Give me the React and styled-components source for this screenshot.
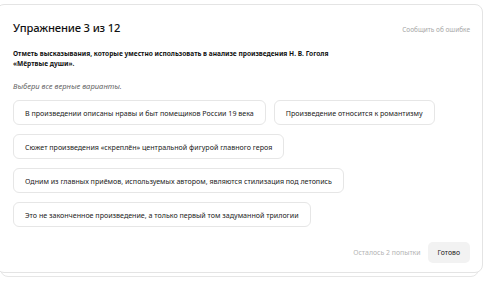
import React from "react";
import styled, { createGlobalStyle } from "styled-components";

const options = [
  ["В произведении описаны нравы и быт помещиков России 19 века", "Произведение относится к романтизму"],
  ["Сюжет произведения «скреплён» центральной фигурой главного героя"],
  ["Одним из главных приёмов, используемых автором, являются стилизация под летопись"],
  ["Это не законченное произведение, а только первый том задуманной трилогии"],
];

const GlobalStyle = createGlobalStyle`
  html, body {
    margin: 0;
    padding: 0;
    background: #ffffff;
    overflow: hidden;
  }
  body {
    font-family: "Noto Sans", "Open Sans", sans-serif;
    color: #000;
  }
`;

const Page = styled.div`
  width: 500px;
  height: 282px;
  padding: 4px 0 0 0;
  box-sizing: border-box;
`;

const Stack = styled.div`
  position: relative;
  width: 487px;
  margin-left: -4px;

  &::before,
  &::after {
    content: "";
    position: absolute;
    background: #fff;
    border: 1px solid #e6e6e6;
    border-radius: 8px;
    z-index: 0;
  }
  &::before {
    left: 4px;
    right: 4px;
    bottom: -4px;
    height: 20px;
  }
  &::after {
    left: 10px;
    right: 12px;
    bottom: -8px;
    height: 20px;
    z-index: -1;
  }
`;

const Card = styled.section`
  position: relative;
  z-index: 1;
  background: #fff;
  border: 1px solid #e4e4e4;
  border-radius: 8px;
  padding: 15px 12px 9px 16px;
  height: 269px;
  box-sizing: border-box;
  display: flex;
  flex-direction: column;
`;

const Header = styled.div`
  display: flex;
  justify-content: space-between;
  align-items: baseline;
`;

const Title = styled.h2`
  margin: 0;
  font-size: 11.2px;
  font-weight: 500;
  letter-spacing: -0.15px;
  color: #111;
`;

const Report = styled.a`
  font-size: 6.5px;
  color: #a8a8a8;
  text-decoration: none;
`;

const Question = styled.p`
  margin: 14px 0 0;
  font-size: 6.6px;
  line-height: 10px;
  font-weight: 700;
  color: #111;
`;

const Hint = styled.p`
  margin: 12px 0 0;
  font-size: 7.6px;
  font-style: italic;
  color: #666;
`;

const Options = styled.div`
  margin-top: 9px;
  display: flex;
  flex-direction: column;
  gap: 9px;
`;

const Row = styled.div`
  display: flex;
  gap: 8px;
`;

const Option = styled.button`
  height: 25px;
  padding: 0 11px;
  background: #fff;
  border: 1px solid #e6e6e6;
  border-radius: 6px;
  font-family: inherit;
  font-size: 7.1px;
  color: #222;
  cursor: pointer;
  white-space: nowrap;
`;

const Footer = styled.div`
  margin-top: auto;
  display: flex;
  justify-content: flex-end;
  align-items: center;
  gap: 7px;
`;

const Attempts = styled.span`
  font-size: 6.9px;
  color: #b4b4b4;
`;

const Done = styled.button`
  height: 21px;
  padding: 0 10px;
  background: #f2f2f2;
  border: none;
  border-radius: 5px;
  font-family: inherit;
  font-size: 6.9px;
  color: #222;
`;

export default function App() {
  return (
    <>
      <GlobalStyle />
      <Page>
        <Stack>
          <Card>
            <Header>
              <Title>Упражнение 3 из 12</Title>
              <Report href="#">Сообщить об ошибке</Report>
            </Header>
            <Question>
              Отметь высказывания, которые уместно использовать в анализе произведения Н. В. Гоголя
              <br />
              «Мёртвые души».
            </Question>
            <Hint>Выбери все верные варианты.</Hint>
            <Options>
              {options.map((row, i) => (
                <Row key={i}>
                  {row.map((text) => (
                    <Option key={text}>{text}</Option>
                  ))}
                </Row>
              ))}
            </Options>
            <Footer>
              <Attempts>Осталось 2 попытки</Attempts>
              <Done>Готово</Done>
            </Footer>
          </Card>
        </Stack>
      </Page>
    </>
  );
}
